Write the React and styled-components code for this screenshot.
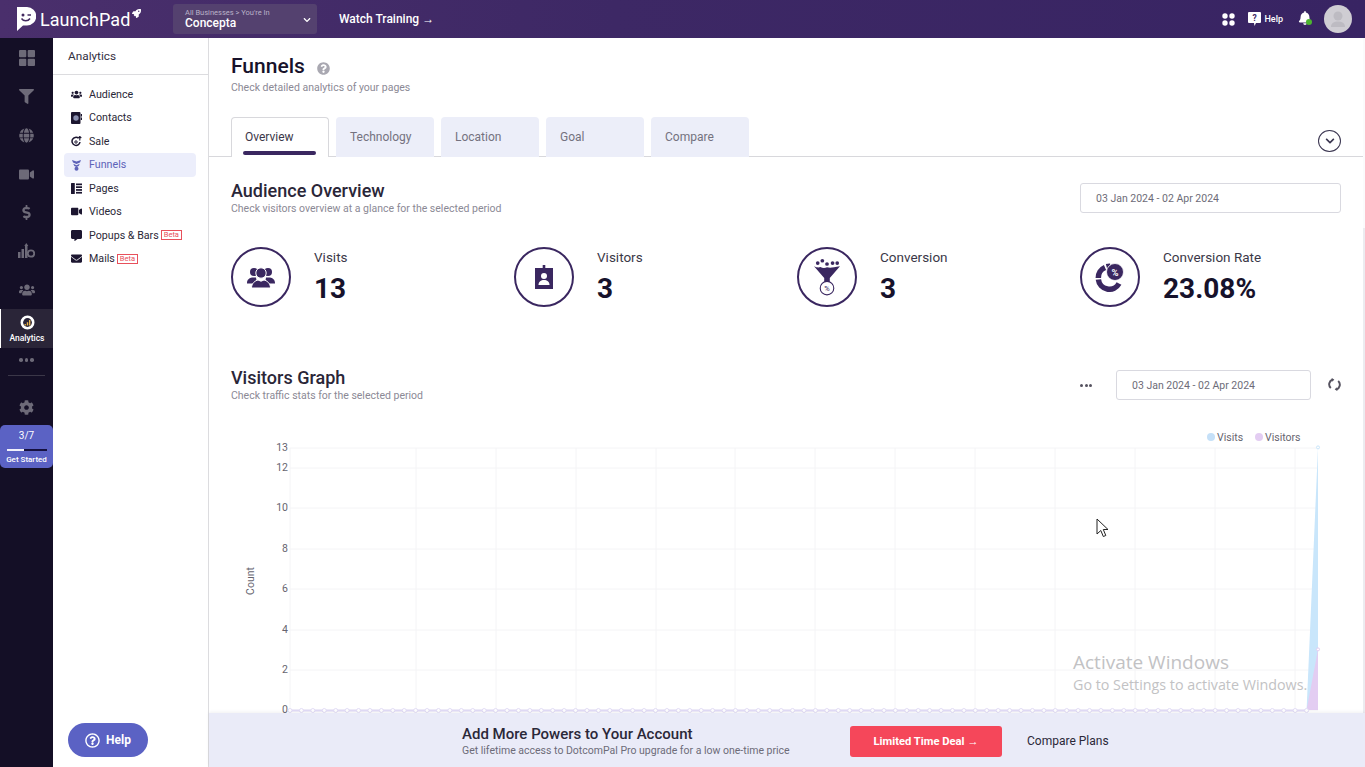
import React from 'react';
import styled, { createGlobalStyle } from 'styled-components';
import {
  FaFilter, FaGlobe, FaVideo, FaDollarSign, FaCog, FaEnvelope, FaCommentAlt, FaUsers,
  FaRegQuestionCircle, FaQuestionCircle, FaBell, FaChevronDown, FaRocket,
} from 'react-icons/fa';

const GlobalStyle = createGlobalStyle`
  html, body { margin: 0; padding: 0; height: 100%; overflow: hidden; background: #fff; }
  body { font-family: Roboto, "Liberation Sans", sans-serif; color: #1c1630; }
  #root { height: 100%; }
  * { box-sizing: border-box; }
`;

const Page = styled.div`
  position: relative;
  width: 1365px;
  height: 767px;
  display: flex;
  flex-direction: column;
  overflow: hidden;
`;

const Header = styled.header`
  flex: 0 0 38px;
  display: flex;
  align-items: center;
  padding: 0 13px 0 17px;
  background: linear-gradient(90deg, #4a2f6c 0%, #3d2865 45%, #382463 100%);
  color: #fff;
`;

const Logo = styled.div`
  display: flex;
  align-items: center;
  width: 148px;
  font-size: 18px;
  letter-spacing: 0.05px;
  gap: 4px;
  svg.rocket { margin: -12px 0 0 -2px; }
`;

const Switcher = styled.div`
  width: 144px;
  height: 30px;
  margin-left: 8px;
  padding: 3px 6px 2px 12px;
  display: flex;
  align-items: center;
  justify-content: space-between;
  background: #54416f;
  border-radius: 3px;
  small { display: block; font-size: 7.5px; line-height: 8px; color: #b9b1c8; margin-top: 0; }
  strong { display: block; font-size: 12px; line-height: 13px; font-weight: 500; }
`;

const Watch = styled.div`
  margin-left: 22px;
  font-size: 12px;
  font-weight: 500;
`;

const HeaderRight = styled.div`
  margin-left: auto;
  display: flex;
  align-items: center;
`;

const HelpLink = styled.div`
  display: flex;
  align-items: center;
  gap: 3px;
  margin-left: 13px;
  font-size: 9px;
  font-weight: 500;
`;

const BellWrap = styled.div`
  position: relative;
  display: flex;
  margin: -3px 0 0 15px;
  &::after {
    content: '';
    position: absolute;
    right: 0;
    bottom: 0;
    width: 6px;
    height: 6px;
    border-radius: 50%;
    background: #4cb52f;
  }
`;

const Avatar = styled.div`
  width: 28px;
  height: 28px;
  margin-left: 12px;
  border-radius: 50%;
  background: #cfcdd3;
  display: flex;
  align-items: center;
  justify-content: center;
`;

const Body = styled.div`
  flex: 1;
  min-height: 0;
  display: flex;
`;

const Rail = styled.nav`
  flex: 0 0 53px;
  display: flex;
  flex-direction: column;
  align-items: center;
  padding-top: 1px;
  background: #140f26;
  color: #6d6a78;
`;

const RailItem = styled.div`
  width: 100%;
  height: 38.6px;
  display: flex;
  align-items: center;
  justify-content: center;
`;

const RailGear = styled.div`
  height: 26px;
  margin-top: 18px;
  display: flex;
  align-items: center;
`;

const RailActive = styled.div`
  width: 100%;
  height: 39px;
  display: flex;
  flex-direction: column;
  align-items: center;
  justify-content: center;
  gap: 3px;
  background: #2a2538;
  border-left: 1px solid #fff;
  color: #fff;
  font-size: 8.5px;
  font-weight: 500;
`;

const RailDots = styled.div`
  margin-top: 8px;
  height: 8px;
  display: flex;
  align-items: center;
  gap: 2px;
  i { width: 3.5px; height: 3.5px; border-radius: 50%; background: #6d6a78; }
`;

const RailRule = styled.div`
  width: 37px;
  height: 1px;
  margin-top: 11px;
  background: #3b3748;
`;

const Progress = styled.div`
  width: 53px;
  height: 43px;
  margin-top: 5px;
  padding-top: 4px;
  display: flex;
  flex-direction: column;
  align-items: center;
  background: #5b62c4;
  border-radius: 5px;
  color: #fff;
  font-size: 10px;
  b { font-weight: 400; line-height: 14px; }
  small { font-size: 8px; font-weight: 500; line-height: 10px; }
`;

const ProgressBar = styled.div`
  width: 40px;
  height: 2px;
  margin: 6px 0 4px;
  background: #15103f;
  i { display: block; height: 100%; background: #f1f1fb; }
`;

const SubNav = styled.aside`
  position: relative;
  flex: 0 0 156px;
  border-right: 1px solid #dcdcdf;
  background: #fff;
`;

const SubTitle = styled.div`
  height: 37px;
  padding: 11px 0 0 15px;
  font-size: 11.8px;
  color: #33303f;
  border-bottom: 1px solid #dcdcdf;
`;

const SubList = styled.div`
  padding: 7.5px 12px 0 11px;
`;

const SubRow = styled.div`
  height: 23.5px;
  display: flex;
  align-items: center;
  gap: 7px;
  padding-left: 7px;
  border-radius: 4px;
  font-size: 10.7px;
  color: ${p => (p.$active ? '#5d62b8' : '#2b2838')};
  background: ${p => (p.$active ? '#eceefb' : 'transparent')};
  > span:first-child { width: 11px; display: flex; justify-content: center; color: ${p => (p.$active ? '#5d62b8' : '#1c1630')}; }
`;

const Beta = styled.span`
  margin-left: -5px;
  padding: 0 2px;
  border: 1px solid #e8505b;
  font-size: 7.5px;
  line-height: 8px;
  color: #e8505b;
`;

const HelpButton = styled.div`
  position: absolute;
  left: 15px;
  bottom: 10px;
  width: 80px;
  height: 34px;
  display: flex;
  align-items: center;
  justify-content: center;
  gap: 6px;
  border-radius: 17px;
  background: #5b62c4;
  color: #fff;
  font-size: 12px;
  font-weight: 700;
`;

const Main = styled.main`
  position: relative;
  flex: 1;
  min-width: 0;
  display: flex;
  flex-direction: column;
`;

const Scroll = styled.div`
  flex: 1;
  min-height: 0;
  overflow: hidden;
  border-right: 2px solid #fbfbfc;
`;

const ScrollThumb = styled.div`
  position: absolute;
  top: 190px;
  right: 0;
  width: 2px;
  height: 485px;
  background: #ececf0;
`;

const PageHead = styled.div`
  padding: 15px 0 0 22px;
`;

const PageTitle = styled.h1`
  margin: 0 0 2px;
  display: flex;
  align-items: center;
  gap: 12px;
  font-size: 21px;
  line-height: 26px;
  font-weight: 500;
  color: #17122b;
  svg { margin-top: 5px; }
`;

const Caption = styled.p`
  margin: 0;
  font-size: 10.5px;
  line-height: 13px;
  color: #8b8995;
`;

const Tabs = styled.div`
  margin-top: 22px;
  padding: 0 22px;
  height: 41px;
  display: flex;
  align-items: flex-end;
  gap: 7px;
  border-bottom: 1px solid #d8d8dc;
`;

const Tab = styled.div`
  position: relative;
  width: ${p => p.$w}px;
  height: 40px;
  margin-bottom: -1px;
  padding: ${p => (p.$active ? 12 : 13)}px 0 0 ${p => (p.$active ? 13 : 14)}px;
  border-radius: 4px 4px 0 0;
  font-size: 12px;
  color: ${p => (p.$active ? '#3b3748' : '#74727f')};
  background: ${p => (p.$active ? '#fff' : '#eceef9')};
  border: ${p => (p.$active ? '1px solid #d8d8dc' : '0')};
  border-bottom: 0;
  &::after {
    content: '';
    display: ${p => (p.$active ? 'block' : 'none')};
    position: absolute;
    left: 11px;
    right: 12px;
    bottom: 2px;
    height: 4px;
    border-radius: 2px;
    background: #3a2760;
  }
`;

const Expand = styled.div`
  margin: 0 0 4px auto;
  width: 23px;
  height: 22px;
  display: flex;
  align-items: center;
  justify-content: center;
  border: 1.3px solid #3a3550;
  border-radius: 50%;
  color: #3a3550;
`;

const SectionHead = styled.div`
  display: flex;
  align-items: center;
  justify-content: space-between;
  padding: 0 22px;
  margin-top: ${p => p.$top}px;
`;

const SectionTitle = styled.h2`
  margin: 0 0 2px;
  font-size: 18px;
  line-height: 19px;
  font-weight: 500;
  color: #2a2638;
`;

const DateBox = styled.div`
  width: ${p => p.$w}px;
  height: 30px;
  display: flex;
  align-items: center;
  padding-left: 15px;
  border: 1px solid #d9d9e0;
  border-radius: 3px;
  font-size: 10.5px;
  color: #6d6b78;
`;

const Controls = styled.div`
  display: flex;
  align-items: center;
`;

const MoreDots = styled.div`
  display: flex;
  gap: 1.5px;
  margin-right: 24px;
  i { width: 3px; height: 3px; border-radius: 50%; background: #55525f; }
`;

const Refresh = styled.div`
  display: flex;
  margin: 0 0 2px 17px;
  color: #55525f;
`;

const Stats = styled.div`
  display: grid;
  grid-template-columns: repeat(4, 283px);
  padding-left: 22px;
  margin-top: 32px;
`;

const Stat = styled.div`
  display: flex;
  align-items: center;
  gap: 23px;
`;

const StatCircle = styled.div`
  width: 60px;
  height: 60px;
  flex: none;
  display: flex;
  align-items: center;
  justify-content: center;
  border: 2px solid #3a2760;
  border-radius: 50%;
  color: #3a2760;
`;

const StatLabel = styled.div`
  font-size: 13.5px;
  line-height: 16px;
  color: #3b3848;
`;

const StatValue = styled.div`
  margin-top: 8px;
  font-size: 28px;
  line-height: 32px;
  font-weight: 700;
  color: #17122b;
`;

const ChartWrap = styled.div`
  margin: 22px 0 0 -1px;
  svg { display: block; }
`;

const Banner = styled.div`
  position: relative;
  flex: 0 0 54px;
  display: flex;
  align-items: center;
  padding-left: 253px;
  background: #eaebf8;
  box-shadow: 0 -1px 3px rgba(60, 60, 90, 0.08);
`;

const BannerText = styled.div`
  width: 388px;
  padding-top: 2px;
  b { display: block; font-size: 15px; line-height: 17px; font-weight: 500; color: #2b2838; }
  span { display: block; margin-top: 1px; font-size: 10.5px; line-height: 13px; color: #6d6b78; }
`;

const DealButton = styled.div`
  width: 152px;
  height: 31px;
  margin-top: 2px;
  display: flex;
  align-items: center;
  justify-content: center;
  border-radius: 3px;
  background: #f5475a;
  color: #fff;
  font-size: 11.2px;
  font-weight: 700;
`;

const PlansLink = styled.div`
  margin: 1px 0 0 25px;
  font-size: 12px;
  color: #2b2838;
`;

const Watermark = styled.div`
  position: absolute;
  left: 1073px;
  top: 650px;
  font-family: "Open Sans", "Liberation Sans", sans-serif;
  color: #c2c2c4;
  pointer-events: none;
  b { display: block; font-size: 19px; line-height: 24px; font-weight: 400; }
  span { display: block; font-size: 14.3px; line-height: 22px; white-space: nowrap; }
`;

const Cursor = styled.svg`
  position: absolute;
  left: 1096px;
  top: 518px;
`;

const GridIcon = () => (
  <svg width="16" height="16" viewBox="0 0 16 16" fill="currentColor">
    <rect x="0" y="0" width="7.3" height="7.3" rx="1" /><rect x="8.7" y="0" width="7.3" height="7.3" rx="1" />
    <rect x="0" y="8.7" width="7.3" height="7.3" rx="1" /><rect x="8.7" y="8.7" width="7.3" height="7.3" rx="1" />
  </svg>
);

const BarsIcon = () => (
  <svg width="17" height="16" viewBox="0 0 17 16" fill="currentColor">
    <rect x="0" y="9" width="2.5" height="6" /><rect x="3.5" y="6" width="2.5" height="9" /><rect x="7" y="2" width="2.5" height="13" />
    <circle cx="13" cy="10.5" r="3.2" fill="none" stroke="currentColor" strokeWidth="1.8" />
    <path d="M13 0l2 3h-4z" transform="translate(-4.7 0)" />
  </svg>
);

const AnalyticsIcon = () => (
  <svg width="15" height="15" viewBox="0 0 15 15">
    <circle cx="7.5" cy="7.5" r="6" fill="#fff" stroke="#fff" strokeWidth="2" />
    <circle cx="7.5" cy="7.5" r="4.4" fill="#2a2538" />
    <path d="M4.5 9h1.4v1.6H4.5zM6.8 7.3h1.4v3.3H6.8zM9 5h1.4v5.6H9z" fill="#e9b44c" />
  </svg>
);

const LogoMark = () => (
  <svg width="19" height="24" viewBox="0 0 19 24" fill="#fff">
    <path d="M0 0h10a9 9 0 0 1 0 18.500H6L0 24z" />
    <circle cx="6" cy="8" r="1.500" fill="#42295f" />
    <path d="M10.500 8h3.500" stroke="#42295f" strokeWidth="1.500" />
    <path d="M4.500 11.500c2 3 6.500 3 8.500 0" stroke="#42295f" strokeWidth="1.400" fill="none" />
  </svg>
);

const FourDots = () => (
  <svg width="13" height="13" viewBox="0 0 13 13" fill="#fff">
    <circle cx="3" cy="3" r="2.700" /><circle cx="10" cy="3" r="2.700" />
    <circle cx="3" cy="10" r="2.700" /><circle cx="10" cy="10" r="2.700" />
  </svg>
);

const HelpBubble = () => (
  <svg width="13" height="14" viewBox="0 0 13 14">
    <path d="M1 0h11a1 1 0 0 1 1 1v9a1 1 0 0 1-1 1H8l-1.500 3L6 11H1a1 1 0 0 1-1-1V1a1 1 0 0 1 1-1z" fill="#fff" />
    <text x="6.500" y="8.700" fontSize="8.500" fontWeight="700" textAnchor="middle" fill="#3d2865" fontFamily="Roboto">?</text>
  </svg>
);

const ContactsIcon = () => (
  <svg width="11" height="12" viewBox="0 0 11 12">
    <rect x="0" y="0" width="9.500" height="12" rx="1" fill="#1c1630" />
    <rect x="9.800" y="2" width="1.200" height="2.500" fill="#1c1630" />
    <rect x="9.800" y="5.500" width="1.200" height="2.500" fill="#1c1630" />
    <circle cx="5" cy="6" r="2.700" fill="#8a8fb0" />
  </svg>
);

const SaleIcon = () => (
  <svg width="11" height="11" viewBox="0 0 11 11" fill="none" stroke="currentColor" strokeWidth="1.500">
    <path d="M7.500 2.200A4 4 0 1 0 9 6" />
    <path d="M8.800 0.500v4M7.300 2l1.500-1.500L10.300 2" strokeWidth="1.100" />
    <circle cx="5" cy="6" r="1.200" strokeWidth="1" />
  </svg>
);

const FunnelNavIcon = () => (
  <svg width="9" height="12" viewBox="0 0 9 12" fill="currentColor">
    <path d="M0 1l4.500 1.500L9 1 8 3.500 4.500 5 1 3.500zM1.300 4.800l3.200 1.400 3.200-1.400-1 2.200-2.200 1-2.200-1z" />
    <circle cx="4.500" cy="9.800" r="2" />
  </svg>
);

const PagesIcon = () => (
  <svg width="11" height="11" viewBox="0 0 11 11" fill="currentColor">
    <rect x="0" y="0" width="3.800" height="11" rx="0.500" />
    <rect x="5" y="0.500" width="6" height="1.700" /><rect x="5" y="3.300" width="6" height="1.700" />
    <rect x="5" y="6.100" width="6" height="1.700" /><rect x="5" y="8.900" width="6" height="1.700" />
  </svg>
);

const RefreshIcon = () => (
  <svg width="13" height="13" viewBox="0 0 12 12" fill="none" stroke="currentColor" strokeWidth="1.800">
    <path d="M4.300 1.400A4.700 4.700 0 0 0 2.600 9.300" />
    <path d="M7.700 10.600A4.700 4.700 0 0 0 9.400 2.700" />
    <path d="M3.300 0l2.500 1.300-1.700 2.200z" fill="currentColor" stroke="none" />
    <path d="M8.700 12l-2.500-1.300 1.700-2.200z" fill="currentColor" stroke="none" />
  </svg>
);

const PeopleIcon = () => (
  <svg width="28" height="21" viewBox="0 0 28 21" fill="currentColor">
    <circle cx="7" cy="5" r="4" /><circle cx="21" cy="5" r="4" />
    <path d="M0 16c0-3.500 2.500-5 5-5.500h4l1 6H0zM28 16c0-3.500-2.500-5-5-5.500h-4l-1 6h10z" />
    <circle cx="14" cy="6" r="5.200" stroke="#fff" strokeWidth="1" />
    <path d="M4.500 21c0-5 4-7.500 6.500-8l3 1.200 3-1.200c2.500.5 6.500 3 6.500 8z" stroke="#fff" strokeWidth="1" />
  </svg>
);

const BadgeIcon = () => (
  <svg width="18" height="24" viewBox="0 0 18 24">
    <path d="M0 3h7.700V0h2.600v3H18v21H0z" fill="currentColor" />
    <circle cx="9" cy="11" r="3" fill="#fff" />
    <path d="M3.500 20c0-3.500 2.500-5 5.500-5s5.500 1.500 5.500 5z" fill="#fff" />
  </svg>
);

const FunnelStatIcon = () => (
  <svg width="26" height="40" viewBox="0 0 28 40" fill="currentColor">
    <circle cx="9" cy="2.500" r="2" /><circle cx="4" cy="5" r="2" /><circle cx="14" cy="6" r="2" />
    <circle cx="20" cy="5" r="2" /><circle cx="25" cy="5" r="2" />
    <path d="M0 8.500c3 1.500 5 1.500 7 .8 2 1.200 5 1.200 7 .2 3 1 6 .5 14-1L17 21v5h-6v-5z" />
    <circle cx="14" cy="32" r="7.300" fill="#fff" stroke="currentColor" strokeWidth="1.200" />
    <text x="14" y="35" fontSize="8" textAnchor="middle" fontFamily="Roboto">%</text>
  </svg>
);

const PieStatIcon = () => (
  <svg width="30" height="30" viewBox="0 0 30 30">
    <path d="M10 5.500A11 11 0 0 0 3.300 16" fill="none" stroke="currentColor" strokeWidth="5.500" />
    <path d="M3.400 17.500A11 11 0 0 0 24 21.500" fill="none" stroke="currentColor" strokeWidth="5.500" />
    <path d="M11.500 4.400A11 11 0 0 1 15 4" fill="none" stroke="currentColor" strokeWidth="5" />
    <circle cx="20" cy="10" r="8.500" fill="currentColor" stroke="#fff" strokeWidth="0.800" />
    <text x="20" y="13.500" fontSize="9.500" fontWeight="700" textAnchor="middle" fill="#fff" fontFamily="Roboto">%</text>
  </svg>
);

const subItems = [
  { label: 'Audience', icon: <FaUsers size={11} /> },
  { label: 'Contacts', icon: <ContactsIcon /> },
  { label: 'Sale', icon: <SaleIcon /> },
  { label: 'Funnels', icon: <FunnelNavIcon />, active: true },
  { label: 'Pages', icon: <PagesIcon /> },
  { label: 'Videos', icon: <FaVideo size={11} /> },
  { label: 'Popups & Bars', icon: <FaCommentAlt size={11} />, beta: true },
  { label: 'Mails', icon: <FaEnvelope size={11} />, beta: true },
];

const tabs = [
  { label: 'Overview', w: 98 },
  { label: 'Technology', w: 98 },
  { label: 'Location', w: 98 },
  { label: 'Goal', w: 98 },
  { label: 'Compare', w: 98 },
];

const stats = [
  { label: 'Visits', value: '13', icon: <PeopleIcon /> },
  { label: 'Visitors', value: '3', icon: <BadgeIcon /> },
  { label: 'Conversion', value: '3', icon: <FunnelStatIcon /> },
  { label: 'Conversion Rate', value: '23.08%', icon: <PieStatIcon /> },
];

// coordinates below are page x minus 208, page y minus 424
const yPos = v => 286 - v * 20.2;
const days = Array.from({ length: 91 }, (_, i) => 82 + (i * 1028) / 90);
const ticks = [
  { v: 13, y: 24 }, { v: 12, y: 44 }, { v: 10, y: 84 }, { v: 8, y: 125 },
  { v: 6, y: 165 }, { v: 4, y: 206 }, { v: 2, y: 246 }, { v: 0, y: 286 },
];
const verticals = [82, 208, 288, 368, 448, 527, 607, 687, 767, 847, 927, 1007, 1087];

const VisitorsChart = () => {
  const last = days[90];
  const prev = days[89];
  return (
    <svg width="1155" height="289" viewBox="0 0 1155 289">
      {ticks.map(t => (
        <g key={t.v}>
          <line x1="82" x2={last} y1={t.y} y2={t.y} stroke="#f4f4f6" />
          <text x="80" y={t.y + 3} fontSize="10.500" fill="#66646f" textAnchor="end" fontFamily="Roboto">{t.v}</text>
        </g>
      ))}
      {verticals.map(x => <line key={x} x1={x} x2={x} y1="24" y2="286" stroke="#f4f4f6" />)}
      <text transform="translate(46 157) rotate(-90)" fontSize="10.500" fill="#66646f" textAnchor="middle" fontFamily="Roboto">Count</text>

      <circle cx="1003" cy="13" r="4" fill="#c5e0f8" />
      <text x="1009" y="17" fontSize="10.500" fill="#66646f" fontFamily="Roboto">Visits</text>
      <circle cx="1051" cy="13" r="4" fill="#e3cdf2" />
      <text x="1057" y="17" fontSize="10.500" fill="#66646f" fontFamily="Roboto">Visitors</text>

      <polygon points={`${prev},286 ${last},${yPos(13)} ${last},286`} fill="#c9e6fb" />
      <polygon points={`${prev},286 ${last},${yPos(3)} ${last},286`} fill="#e3cdf2" />
      <line x1="82" x2={prev} y1="286.500" y2="286.500" stroke="#e2dcf6" strokeWidth="2" />
      {days.slice(0, 90).map(x => (
        <circle key={x} cx={x} cy="286.500" r="2" fill="#fff" stroke="#e2dcf6" />
      ))}
      <circle cx={last} cy={yPos(13)} r="1.500" fill="#fff" stroke="#c9e6fb" />
      <circle cx={last} cy={yPos(3)} r="1.500" fill="#fff" stroke="#e3cdf2" />
    </svg>
  );
};

const App = () => (
  <Page>
    <GlobalStyle />
    <Header>
      <Logo>
        <LogoMark />
        <span>LaunchPad</span>
        <FaRocket className="rocket" size={9} />
      </Logo>
      <Switcher>
        <div>
          <small>All Businesses &gt; You're In</small>
          <strong>Concepta</strong>
        </div>
        <FaChevronDown size={8} />
      </Switcher>
      <Watch>Watch Training →</Watch>
      <HeaderRight>
        <FourDots />
        <HelpLink><HelpBubble />Help</HelpLink>
        <BellWrap><FaBell size={14} /></BellWrap>
        <Avatar>
          <svg width="14" height="16" viewBox="0 0 14 16" fill="#bdbbc2">
            <circle cx="7" cy="5" r="4.500" /><path d="M0 16c0-4 3-5.500 7-5.500s7 1.500 7 5.500z" />
          </svg>
        </Avatar>
      </HeaderRight>
    </Header>
    <Body>
      <Rail>
        <RailItem><GridIcon /></RailItem>
        <RailItem><FaFilter size={15} /></RailItem>
        <RailItem><FaGlobe size={15} /></RailItem>
        <RailItem><FaVideo size={15} /></RailItem>
        <RailItem><FaDollarSign size={15} /></RailItem>
        <RailItem><BarsIcon /></RailItem>
        <RailItem><FaUsers size={16} /></RailItem>
        <RailActive><AnalyticsIcon />Analytics</RailActive>
        <RailDots><i /><i /><i /></RailDots>
        <RailRule />
        <RailGear><FaCog size={15} /></RailGear>
        <Progress>
          <b>3/7</b>
          <ProgressBar><i style={{ width: `${(3 / 7) * 100}%` }} /></ProgressBar>
          <small>Get Started</small>
        </Progress>
      </Rail>
      <SubNav>
        <SubTitle>Analytics</SubTitle>
        <SubList>
          {subItems.map(item => (
            <SubRow key={item.label} $active={item.active}>
              <span>{item.icon}</span>
              <span>{item.label}</span>
              {item.beta && <Beta>Beta</Beta>}
            </SubRow>
          ))}
        </SubList>
        <HelpButton><FaRegQuestionCircle size={15} />Help</HelpButton>
      </SubNav>
      <Main>
        <Scroll>
          <PageHead>
            <PageTitle>
              Funnels
              <FaQuestionCircle size={13} color="#a9a8b1" />
            </PageTitle>
            <Caption>Check detailed analytics of your pages</Caption>
          </PageHead>
          <Tabs>
            {tabs.map((t, i) => (
              <Tab key={t.label} $w={t.w} $active={i === 0}>{t.label}</Tab>
            ))}
            <Expand><FaChevronDown size={10} /></Expand>
          </Tabs>
          <SectionHead $top={24}>
            <div>
              <SectionTitle>Audience Overview</SectionTitle>
              <Caption>Check visitors overview at a glance for the selected period</Caption>
            </div>
            <DateBox $w={261}>03 Jan 2024 - 02 Apr 2024</DateBox>
          </SectionHead>
          <Stats>
            {stats.map(s => (
              <Stat key={s.label}>
                <StatCircle>{s.icon}</StatCircle>
                <div>
                  <StatLabel>{s.label}</StatLabel>
                  <StatValue>{s.value}</StatValue>
                </div>
              </Stat>
            ))}
          </Stats>
          <SectionHead $top={61}>
            <div>
              <SectionTitle>Visitors Graph</SectionTitle>
              <Caption>Check traffic stats for the selected period</Caption>
            </div>
            <Controls>
              <MoreDots><i /><i /><i /></MoreDots>
              <DateBox $w={195}>03 Jan 2024 - 02 Apr 2024</DateBox>
              <Refresh><RefreshIcon /></Refresh>
            </Controls>
          </SectionHead>
          <ChartWrap><VisitorsChart /></ChartWrap>
        </Scroll>
        <ScrollThumb />
        <Banner>
          <BannerText>
            <b>Add More Powers to Your Account</b>
            <span>Get lifetime access to DotcomPal Pro upgrade for a low one-time price</span>
          </BannerText>
          <DealButton>Limited Time Deal →</DealButton>
          <PlansLink>Compare Plans</PlansLink>
        </Banner>
      </Main>
    </Body>
    <Watermark>
      <b>Activate Windows</b>
      <span>Go to Settings to activate Windows.</span>
    </Watermark>
    <Cursor width="13" height="20" viewBox="0 0 13 20">
      <path d="M1 1v15l3.800-3.500 2.500 6 2.500-1-2.500-6H12z" fill="#fff" stroke="#222" strokeWidth="1" />
    </Cursor>
  </Page>
);

export default App;
